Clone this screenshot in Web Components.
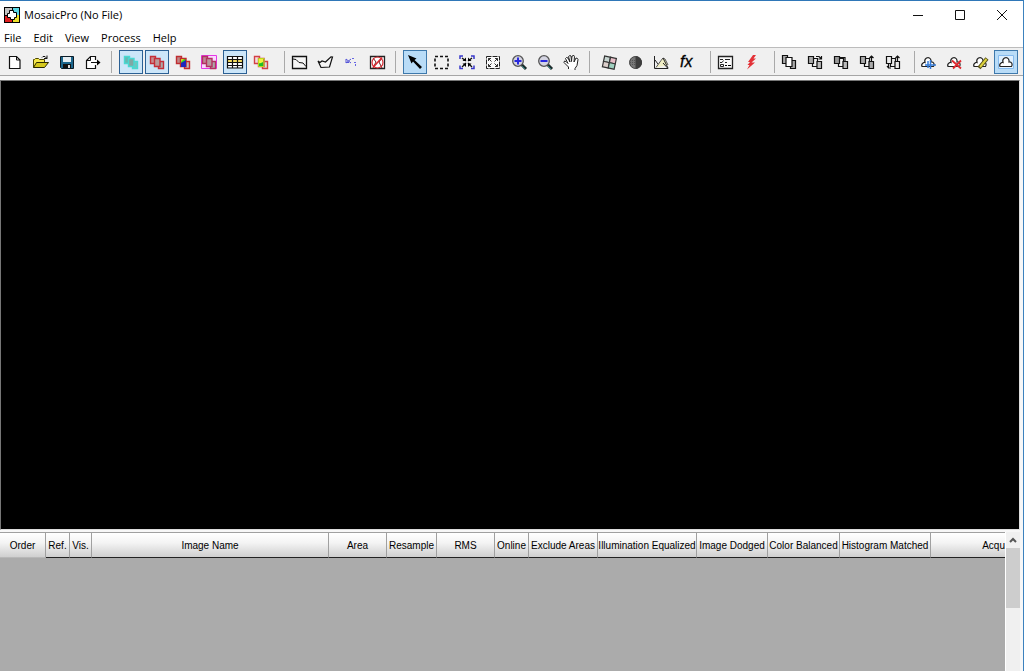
<!DOCTYPE html>
<html lang="en">
<head>
<meta charset="utf-8">
<title>MosaicPro (No File)</title>
<style>
  body { margin: 0; font-family: "Open Sans", "Noto Sans", sans-serif; color: #000; }
</style>
</head>
<body>
<app-window></app-window>
<script>
const define = (name, html, setup) => {
  const template = document.createElement('template');
  template.innerHTML = html;
  customElements.define(name, class extends HTMLElement {
    constructor() {
      super();
      this.attachShadow({ mode: 'open' }).append(template.content.cloneNode(true));
    }
    connectedCallback() { if (setup) setup(this, this.shadowRoot); }
  });
};

const stack = (line, fills) =>
  `<g fill="none" stroke="${line}" stroke-width="1.4"><path fill="${fills[2]}" d="M9.500 7.500h5v7h-5z"/><path fill="${fills[0]}" d="M1.500 2.500h5v7h-5z"/><path fill="${fills[1]}" d="M5.500 4.500h5.500v8H5.500z"/></g>`;
const copies = (f, extra) =>
  `<g stroke="#111" stroke-width="1.2"><path fill="${f[2]}" d="M9.500 6.500h5v8h-5z"/><path fill="${f[0]}" d="M1.500 1.500h5v8h-5z"/><path fill="${f[1]}" d="M5 3.500h6v9H5z"/>${extra || ''}</g>`;
const moved = (f, extra) =>
  `<g stroke="#111" stroke-width="1.2"><path fill="${f[1]}" d="M5.500 4.500h5v8h-5z"/><path fill="${f[0]}" d="M1.500 2.500h5v7h-5z"/><path fill="${f[2]}" d="M10 7.500h4.500v7H10z"/>${extra}</g>`;
const cloud = '<path fill="#fff" stroke="#222" stroke-width="1.200" d="M2 12.500q-1-2 1-3.500 1-.8 2-.5-1-3 1.500-4.500 2.500-1 4 1 .8 1.500.5 3 2-.2 2.800 1.200.8 1.800-.3 3.300z"/>';
const lens = '<path d="M10 10l5 5" stroke="#1c2b2b" stroke-width="3"/><path d="M11 12l3 3" stroke="#2d8080"/><circle cx="7" cy="7" r="5.300" fill="#d4d4e2" stroke="#555" stroke-width="1.300"/>';

const icons = {
  new: '<path fill="#fff" stroke="#111" stroke-width="1.200" d="M2.500 2.500h7l3.500 3.500v8.500H2.500z"/><path fill="none" stroke="#111" d="M9.500 2.500V6H13"/>',
  open: '<path fill="#f5e74a" stroke="#4b4600" d="M.5 13.500v-8h1l1-1h3l1 1h5v3"/><path fill="#d5c81c" stroke="#2b2900" d="M.5 13.500l3-5h12l-4 5z"/><path fill="none" stroke="#111" d="M9 3.500l1-1h2l2 2m0-3v3h-3"/>',
  save: '<path fill="#1c668c" stroke="#0b1b26" d="M1.500 2.500h13v12h-12l-1-1z"/><path fill="#e6eef2" d="M4 3h8v5H4z"/><path fill="#111" d="M4 10h8v4H4z"/><path fill="#ddd" d="M9 11h2v3H9z"/>',
  export: '<path fill="#fff" stroke="#111" stroke-width="1.200" d="M10.500 6V2.500h-5l-4 4v8h9V11"/><path fill="none" stroke="#111" d="M5.500 3v3.500H2M6 8.500h9"/><path d="M12 5.500l3.500 3-3.500 3z"/>',
  stackcyan: stack('#48d9d2', ['#66b8b2', '#7fa8a4', '#72c4bf']),
  stackred: stack('#c52e38', ['#c78c90', '#b99a9a', '#aaa']),
  stackcolor: stack('#c02c30', ['#bd8888', '#30e020', '#bbb']) + '<path fill="#2026bc" d="M6 9l5-3v7H6z"/><path fill="#d9d520" d="M6 5h3L6 8z"/>',
  stackpink: '<path fill="#fad8ff" stroke="#e636e6" d="M.5 1.500h15v13H.5z"/>' + stack('#b33260', ['#bc8996', '#b79a9f', '#aaa']),
  table: '<path fill="#fff" d="M.5 2.500h15v11H.5z"/><path fill="#f4dd61" d="M1 5h14v3H1z"/><path fill="none" stroke="#111" stroke-width="1.200" d="M.5 2.500h15v11.500H.5zM.5 5.500h15M.5 8.500h15M.5 11.500h15M5.500 3v11M10.500 3v11"/>',
  stackbright: stack('#d34045', ['#f2dede', '#68ed20', '#ddd']) + '<path fill="#f3f23a" d="M6 5h4v4H6z"/><path fill="#20be28" d="M6 10l4-2v4H6z"/><path fill="none" stroke="#b9d91c" d="M5.500 4.500h5.500v8H5.500z"/>',
  line: '<path fill="#f6f6f6" stroke="#111" stroke-width="1.300" d="M1.500 2.500h14v12h-14z"/><path fill="none" stroke="#111" d="M2 5l3 .5 3 3 4 .5 3 3.500"/>',
  poly: '<path fill="#f6f6f6" stroke="#111" stroke-width="1.200" d="M1 7l3 6.500 8.500-.5 3-10-1.500-.2L8.500 8 5 7 3 8.500z"/>',
  points: '<path fill="none" stroke="#5555d8" d="M3 5l5 4M8 5L3 9M3 5v4M3 8.500h3"/><path fill="#6666e4" d="M9 4h2v1H9zM11 8h2v1h-2zM12 10h1v2h-1z"/>',
  nocut: '<path fill="#fff" stroke="#222" stroke-width="1.300" d="M1.500 2.500h14v12h-14z"/><path fill="none" stroke="#6b1d1d" d="M4 4l3 4-3 6M13 4l-3 4 3 6"/><circle cx="8.500" cy="8.500" r="5.500" fill="none" stroke="#d82931" stroke-width="1.200"/><path stroke="#d82931" stroke-width="1.600" d="M4 13.500l9-10"/>',
  arrow: '<path d="M1 1l8.500 3.500L7.500 6l7.500 7-2 2L6 7.500 4.500 9.500z"/>',
  select: '<path fill="none" stroke="#111" stroke-width="1.600" stroke-dasharray="3 2" d="M2 2.500h13v12H2z"/>',
  fitall: '<path fill="none" stroke="#3737c9" stroke-width="1.500" d="M1 5V2h3M12 2h3v3M15 11.500v3h-3M4 14.500H1v-3"/><path stroke="#111" stroke-width="1.300" d="M3 4l4 3M13 4L9 7M3 13l4-4M13 13L9 9"/><path d="M7 3.500V7H3.500zM9 3.500V7h3.500zM3.500 9.500H7V13zM9 9.500h3.500L9 13z"/>',
  extent: '<path fill="#fafafa" stroke="#222" stroke-dasharray="5 1" d="M1.500 2.500h13v12h-13z"/><path fill="none" stroke="#333" d="M3.500 4.500l3 3M12.500 4.500l-3 3M3.500 12.500l3-3M12.500 12.500l-3-3M3.500 7V4.500H6M10 4.500h2.500V7M12.500 10v2.500H10M6 12.500H3.500V10"/>',
  zoomin: lens + '<path stroke="#2929dd" stroke-width="2" d="M7 3.500v7M3.500 7h7"/>',
  zoomout: lens + '<path stroke="#2929dd" stroke-width="2" d="M3.500 7h7"/>',
  hand: '<path fill="#fff" stroke="#222" d="M5.500 15v-2L1 8.500 1.500 7l1.500.5 2 2-2.500-5 1-1 1.500.5L7 8 5.500 2.500 7 1.500l1 .5.500 5.500.5-5.500 2-.5.500 1-.5 5.500 2-4 1.500.5.500 1-1 6-2 3v1.500"/>',
  warp: '<g stroke="#333" stroke-width="1.200" transform="rotate(12 8 8)"><path fill="#c6d4d0" d="M2.500 3h6v5.500h-6z"/><path fill="#e8bfc9" d="M8.500 3h6v5.500h-6z"/><path fill="#dccfcb" d="M2.500 8.500h6V14h-6z"/><path fill="#9fd0bf" d="M8.500 8.500h6V14h-6z"/></g>',
  dodge: '<circle cx="8.500" cy="8.500" r="6" fill="#777" stroke="#444"/><path fill="#3d3d3d" d="M8.500 2a6.500 6.500 0 0 1 0 13z"/><path stroke="#555" stroke-dasharray="1 1" d="M3 6.500h5M3 8.500h5M3 10.500h5"/>',
  histogram: '<path fill="#f1efc5" stroke="#555" d="M3 13.500l5-7 2-2.500 2 1 3 6"/><path fill="none" stroke="#222" d="M1.500 2v12.500H15L10 9M2 6l3 4M10 4l5 10"/>',
  effects: '<text x="1" y="13" font-family="Liberation Sans, Arial, sans-serif" font-size="16" font-style="italic" stroke="#000" stroke-width=".3">fx</text>',
  options: '<path fill="#fafafa" stroke="#222" stroke-width="1.300" d="M1.500 2.500h14v12h-14z"/><path fill="none" stroke="#222" d="M3 5.500h3M8 5.500h5M3 8.500h2l1.500-2M8 8.500h2M3.500 12.500h3v-2h-3z"/><path d="M8 11h2v1H8zM11 11h3v1h-3z"/>',
  run: '<path fill="#e33137" d="M10 1h3l-2.500 3.500H13L8.500 8.500H12L4 15.500l2.500-4.500H4.500L7 8H5z"/>',
  copy1: copies(['#aaa', '#fff', '#aaa']),
  copy2: moved(['#aaa', '#eee', '#bbb'], '<path fill="none" d="M9 2.500h3l2 2M14.500 2v3h-3"/>'),
  copy3: moved(['#999', '#f4f4f4', '#bbb'], '<path fill="none" d="M7 3.500h5V7"/>'),
  copy4: moved(['#aaa', '#eee', '#aaa'], '<path fill="none" d="M12.500 7V2M10.500 4l2-2 2 2"/>'),
  copy5: moved(['#eee', '#eee', '#eee'], '<path fill="none" d="M12.500 7V2M10.500 4l2-2 2 2M3.500 10v4M2 12l1.500 2L6 14"/>'),
  cloudadd: cloud + '<path stroke="#347bd8" stroke-width="1.500" d="M5 11h11M10.500 6v9M8 7v7"/>',
  clouddel: cloud + '<path stroke="#df2930" stroke-width="1.800" d="M6 6.500l9 8M15 6.500l-8 8"/>',
  cloudedit: cloud + '<path stroke="#56511b" stroke-width="4" d="M7 14l8-9.500"/><path stroke="#ddd33c" stroke-width="2" d="M8 13l6.500-8"/>',
  cloud: '<path fill="#dff0ff" stroke="#86bbee" d="M.5 1.500h15v13H.5z"/>' + cloud
};

define('tool-button', `
<style>
  :host { display: block; flex: none; }
  button { display: grid; place-items: center; box-sizing: border-box; width: 24px; height: 24px; padding: 0; border: 1px solid transparent; background: none; }
  :host([active]) button { background: #cce6f9; border-color: #2b6094; }
  :host([checked]) button { background: #b9dcf7; border-color: #3e79ac; }
  svg { display: block; width: 16px; height: 16px; overflow: visible; }
</style>
<button type="button"></button>`, (host, root) => {
  const button = root.querySelector('button');
  button.setAttribute('aria-label', host.getAttribute('label'));
  button.innerHTML = `<svg viewBox="0 0 16 16" aria-hidden="true">${icons[host.getAttribute('icon')]}</svg>`;
});

define('tool-separator', `
<style>
  :host { display: block; flex: none; width: 1px; height: 22px; margin: 0 7px 0 6px; background: #a9a9a9; }
  :host([late]) { margin: 0 2px 0 11px; }
  :host([tight]) { margin: 0 1px 0 9px; }
</style>`);

define('tool-group', `
<style>:host { display: flex; gap: 2px; flex: none; }</style><slot></slot>`);

define('tool-bar', `
<style>
  :host { display: flex; align-items: center; box-sizing: border-box; height: 29px; padding-left: 3px; background: #f0f0f0; border-top: 1px solid #bcbcbc; border-bottom: 1px solid #a6a6a6; overflow: hidden; }
</style><slot></slot>`);

define('title-bar', `
<style>
  :host { display: flex; align-items: center; height: 27px; padding-left: 4px; background: #fff; font-size: 11px; }
  .logo { width: 16px; height: 16px; margin-right: 4px; }
  h1 { flex: 1; margin: 0; font-size: inherit; font-weight: 400; line-height: 16px; white-space: nowrap; }
  button { width: 42px; height: 27px; padding: 0; border: 0; background: none; display: grid; place-items: center; }
  button svg { width: 12px; height: 12px; fill: none; stroke: #111; }
</style>
<svg class="logo" viewBox="0 0 16 16" aria-hidden="true"><path d="M0 0h16v16H0z"/><path fill="#c4c4c4" d="M1 1h7v7H1z"/><path fill="#5ad8e5" d="M9 1h6v7H9z"/><path fill="#e02020" d="M1 9h7v6H1z"/><path fill="#efe129" d="M9 8h6v7H9z"/><path fill="#fff" stroke="#000" d="M5.500 3.500h4v2h3v5h-2v2h-4v-2h-3v-4h2z"/></svg>
<h1><slot></slot></h1>
<button type="button" aria-label="Minimize"><svg viewBox="0 0 12 12"><path d="M1 6.500h10"/></svg></button>
<button type="button" aria-label="Maximize"><svg viewBox="0 0 12 12"><path d="M1.500 1.500h9v9h-9z"/></svg></button>
<button type="button" aria-label="Close"><svg viewBox="0 0 12 12"><path d="M1 1l10 10M11 1L1 11"/></svg></button>`);

define('menu-bar', `
<style>
  :host { display: block; background: #fff; }
  nav { display: flex; height: 19px; gap: 12px; padding-left: 4px; }
  button { padding: 0; border: 0; background: none; font: inherit; font-size: 11px; line-height: 18px; color: inherit; }
</style>
<nav aria-label="Main menu"><button type="button">File</button><button type="button">Edit</button><button type="button">View</button><button type="button">Process</button><button type="button">Help</button></nav>`);

define('map-view', `
<style>
  :host { display: block; box-sizing: border-box; margin: 4px 3px 0 0; background: #000; border: 1px solid #777; border-right-color: #ddd; border-bottom-color: #ddd; }
</style>`);

define('scroll-rail', `
<style>
  :host { display: flex; flex-direction: column; width: 15px; flex: none; background: #f0f0f0; border-left: 1px solid #fff; box-sizing: border-box; }
  button { height: 16px; padding: 0; border: 0; background: none; display: grid; place-items: center; }
  svg { width: 8px; height: 6px; fill: none; stroke: #555; stroke-width: 2; }
  div { height: 60px; background: #cdcdcd; }
</style>
<button type="button" aria-label="Scroll up"><svg viewBox="0 0 8 6"><path d="M1 5l3-3 3 3"/></svg></button><div></div>`);

define('image-grid', `
<style>
  :host { display: flex; margin: 2px 3px 0 0; min-height: 0; background: #f0f0f0; }
  .pane { flex: 1; min-width: 0; overflow: hidden; background: #ababab; border-top: 1px solid #a0a0a0; }
  table { width: 100%; table-layout: fixed; border-collapse: separate; border-spacing: 0; font-family: "Liberation Sans", Arial, sans-serif; font-size: 10px; }
  th { box-sizing: border-box; height: 25px; padding: 0; font-weight: 400; white-space: nowrap; overflow: hidden; text-align: center;
       background: linear-gradient(#fff, #f4f4f4 40%, #cfcfcf); border-right: 1px solid #a0a0a0; border-bottom: 1px solid #222; }
  th:first-child { border-bottom-color: #b8b8b8; }
  th:last-child { border-right: 0; text-align: right; }
</style>
<div class="pane"><table><colgroup></colgroup><thead><tr></tr></thead></table></div>
<scroll-rail></scroll-rail>`, (host, root) => {
  const columns = [['Order', 46], ['Ref.', 24], ['Vis.', 22], ['Image Name', 237], ['Area', 58], ['Resample', 50], ['RMS', 58], ['Online', 34], ['Exclude Areas', 69], ['Illumination Equalized', 99], ['Image Dodged', 71], ['Color Balanced', 72], ['Histogram Matched', 91], ['Acqu', 0]];
  root.querySelector('colgroup').innerHTML = columns.map(c => `<col${c[1] ? ` style="width:${c[1]}px"` : ''}>`).join('');
  root.querySelector('tr').innerHTML = columns.map(c => `<th scope="col">${c[0]}</th>`).join('');
});

const b = (icon, label, state = '') => `<tool-button icon="${icon}" label="${label}" ${state}></tool-button>`;
define('app-window', `
<style>
  :host { display: flex; flex-direction: column; box-sizing: border-box; height: 100vh; background: #f7f7f7; border-top: 1px solid #2f77b8; border-right: 1px solid #3c82be; overflow: hidden; }
  map-view { flex: 449 1 0; }
  image-grid { flex: 139 1 0; }
</style>
<title-bar>MosaicPro (No File)</title-bar>
<menu-bar></menu-bar>
<tool-bar>
  <tool-group>${b('new', 'New')}${b('open', 'Open')}${b('save', 'Save')}${b('export', 'Export')}</tool-group>
  <tool-separator></tool-separator>
  <tool-group>${b('stackcyan', 'Show active areas', 'active')}${b('stackred', 'Show outlines', 'active')}${b('stackcolor', 'Show rasters')}${b('stackpink', 'Show output area')}${b('table', 'Show image list', 'active')}${b('stackbright', 'Show corrected images')}</tool-group>
  <tool-separator late></tool-separator>
  <tool-group>${b('line', 'Seamline')}${b('poly', 'Seam polygon')}${b('points', 'Undo seam')}${b('nocut', 'Delete seamlines')}</tool-group>
  <tool-separator></tool-separator>
  <tool-group>${b('arrow', 'Select', 'checked')}${b('select', 'Select box')}${b('fitall', 'Fit all')}${b('extent', 'Fit extent')}${b('zoomin', 'Zoom in')}${b('zoomout', 'Zoom out')}${b('hand', 'Pan')}</tool-group>
  <tool-separator></tool-separator>
  <tool-group>${b('warp', 'Resample')}${b('dodge', 'Dodge')}${b('histogram', 'Color corrections')}${b('effects', 'Functions')}</tool-group>
  <tool-separator late></tool-separator>
  <tool-group>${b('options', 'Output options')}${b('run', 'Run mosaic')}</tool-group>
  <tool-separator late></tool-separator>
  <tool-group>${b('copy1', 'Send to front')}${b('copy2', 'Move up')}${b('copy3', 'Move down')}${b('copy4', 'Send to back')}${b('copy5', 'Swap order')}</tool-group>
  <tool-separator tight></tool-separator>
  <tool-group>${b('cloudadd', 'Add exclude area')}${b('clouddel', 'Delete exclude area')}${b('cloudedit', 'Edit exclude area')}${b('cloud', 'Show exclude areas', 'checked')}</tool-group>
</tool-bar>
<map-view></map-view>
<image-grid></image-grid>`);
</script>
</body>
</html>
